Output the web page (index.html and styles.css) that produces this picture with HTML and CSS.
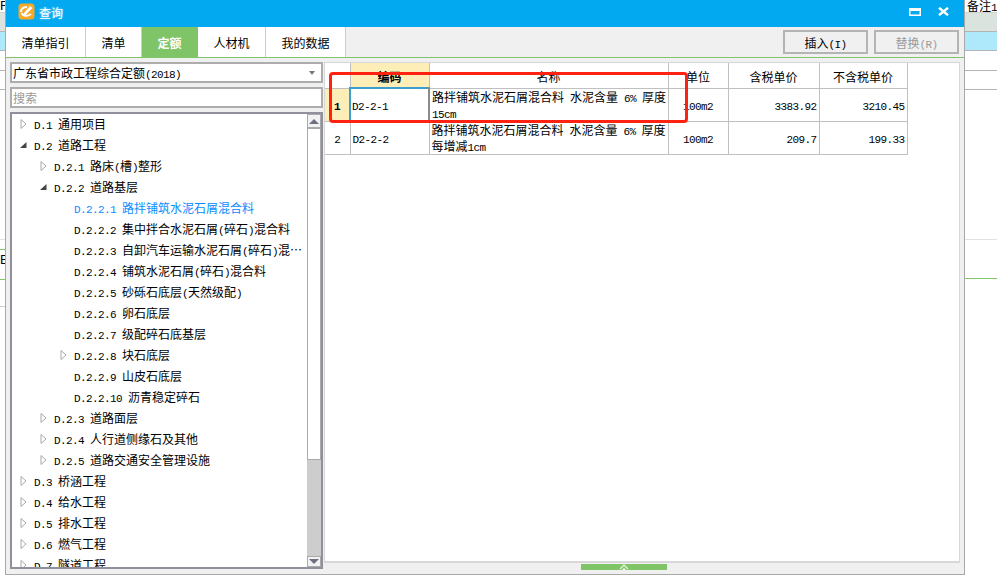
FILE: index.html
```html
<!DOCTYPE html>
<html lang="zh-CN">

<head>
  <meta charset="UTF-8">
  <title>查询</title>
  <link rel="stylesheet" href="styles.css">
</head>

<body>
  <div class="side side-left">
    <div class="side-head">F</div>
    <div class="side-row grey"></div>
    <div class="side-row blue"></div>
    <div class="side-row"></div>
    <div class="side-row"></div>
    <div class="side-low">
      <div class="side-line faint"></div>
      <div class="side-line green"></div>
      <div class="side-e">E</div>
      <div class="side-line green"></div>
      <div class="side-line gap"></div>
    </div>
  </div>

  <div class="window">
    <div class="titlebar">
      <svg class="logo" width="17" height="17" viewBox="0 0 17 17">
        <rect x="0.5" y="0.5" width="16" height="16" rx="3.5" fill="#f9a825" />
        <path d="M3 9 C3 5 6 4 9 4 M3.5 10 C5 13 9 14 13 11" fill="none" stroke="#fff" stroke-width="2" />
        <path d="M6 10 L12 3 L14.5 5 L8 11.5 L5.5 12.5 Z" fill="#fff" />
      </svg>
      <span class="title-text">查询</span>
      <svg class="win-btn" width="12" height="8" viewBox="0 0 12 8">
        <path d="M0 0 H12 V8 H0 Z M1.5 3 V6.5 H10.5 V3 Z" fill="#fff" fill-rule="evenodd" />
      </svg>
      <svg class="win-btn close" width="11" height="9" viewBox="0 0 11 9">
        <path d="M1 0.8 L10 8.2 M10 0.8 L1 8.2" stroke="#fff" stroke-width="2.4" />
      </svg>
    </div>

    <div class="toolbar">
      <div class="tabs">
        <div class="tab w80">清单指引</div>
        <div class="tab w56">清单</div>
        <div class="tab w56 active">定额</div>
        <div class="tab w68">人材机</div>
        <div class="tab w80">我的数据</div>
      </div>
      <div class="actions">
        <button class="btn">插入<span class="la">(I)</span></button>
        <button class="btn disabled">替换<span class="la">(R)</span></button>
      </div>
    </div>

    <div class="content">
      <div class="left-panel">
        <div class="combo">
          <span>广东省市政工程综合定额<span class="la">(2018)</span></span>
          <span class="combo-arrow"></span>
        </div>
        <div class="search">搜索</div>
        <div class="tree">
          <div class="tree-list">
            <div class="node"><svg class="tw" viewBox="0 0 7 10"><path class="closed" d="M1 0.5 L6 5 L1 9.5 Z" /></svg><span class="la">D.1 </span>通用项目</div>
            <div class="node"><svg class="tw" viewBox="0 0 7 10"><path class="open" d="M0 8 L6.5 8 L6.5 2 Z" /></svg><span class="la">D.2 </span>道路工程</div>
            <div class="node l1"><svg class="tw" viewBox="0 0 7 10"><path class="closed" d="M1 0.5 L6 5 L1 9.5 Z" /></svg><span class="la">D.2.1 </span>路床<span class="la">(</span>槽<span class="la">)</span>整形</div>
            <div class="node l1"><svg class="tw" viewBox="0 0 7 10"><path class="open" d="M0 8 L6.5 8 L6.5 2 Z" /></svg><span class="la">D.2.2 </span>道路基层</div>
            <div class="node l2 selected"><span class="la">D.2.2.1 </span>路拌铺筑水泥石屑混合料</div>
            <div class="node l2"><span class="la">D.2.2.2 </span>集中拌合水泥石屑<span class="la">(</span>碎石<span class="la">)</span>混合料</div>
            <div class="node l2"><span class="la">D.2.2.3 </span>自卸汽车运输水泥石屑<span class="la">(</span>碎石<span class="la">)</span>混…</div>
            <div class="node l2"><span class="la">D.2.2.4 </span>铺筑水泥石屑<span class="la">(</span>碎石<span class="la">)</span>混合料</div>
            <div class="node l2"><span class="la">D.2.2.5 </span>砂砾石底层<span class="la">(</span>天然级配<span class="la">)</span></div>
            <div class="node l2"><span class="la">D.2.2.6 </span>卵石底层</div>
            <div class="node l2"><span class="la">D.2.2.7 </span>级配碎石底基层</div>
            <div class="node l2"><svg class="tw" viewBox="0 0 7 10"><path class="closed" d="M1 0.5 L6 5 L1 9.5 Z" /></svg><span class="la">D.2.2.8 </span>块石底层</div>
            <div class="node l2"><span class="la">D.2.2.9 </span>山皮石底层</div>
            <div class="node l2"><span class="la">D.2.2.10 </span>沥青稳定碎石</div>
            <div class="node l1"><svg class="tw" viewBox="0 0 7 10"><path class="closed" d="M1 0.5 L6 5 L1 9.5 Z" /></svg><span class="la">D.2.3 </span>道路面层</div>
            <div class="node l1"><svg class="tw" viewBox="0 0 7 10"><path class="closed" d="M1 0.5 L6 5 L1 9.5 Z" /></svg><span class="la">D.2.4 </span>人行道侧缘石及其他</div>
            <div class="node l1"><svg class="tw" viewBox="0 0 7 10"><path class="closed" d="M1 0.5 L6 5 L1 9.5 Z" /></svg><span class="la">D.2.5 </span>道路交通安全管理设施</div>
            <div class="node"><svg class="tw" viewBox="0 0 7 10"><path class="closed" d="M1 0.5 L6 5 L1 9.5 Z" /></svg><span class="la">D.3 </span>桥涵工程</div>
            <div class="node"><svg class="tw" viewBox="0 0 7 10"><path class="closed" d="M1 0.5 L6 5 L1 9.5 Z" /></svg><span class="la">D.4 </span>给水工程</div>
            <div class="node"><svg class="tw" viewBox="0 0 7 10"><path class="closed" d="M1 0.5 L6 5 L1 9.5 Z" /></svg><span class="la">D.5 </span>排水工程</div>
            <div class="node"><svg class="tw" viewBox="0 0 7 10"><path class="closed" d="M1 0.5 L6 5 L1 9.5 Z" /></svg><span class="la">D.6 </span>燃气工程</div>
            <div class="node"><svg class="tw" viewBox="0 0 7 10"><path class="closed" d="M1 0.5 L6 5 L1 9.5 Z" /></svg><span class="la">D.7 </span>隧道工程</div>
          </div>
          <div class="scrollbar">
            <div class="sb-btn"><span class="sb-up"></span></div>
            <div class="sb-thumb"></div>
            <div class="sb-track"></div>
            <div class="sb-btn small"><span class="sb-down"></span></div>
          </div>
        </div>
      </div>

      <div class="right-panel">
        <div class="result">
          <table class="grid">
            <colgroup>
              <col class="c-no">
              <col class="c-code">
              <col class="c-name">
              <col class="c-unit">
              <col class="c-tax">
              <col class="c-notax">
            </colgroup>
            <tr class="head">
              <th></th>
              <th class="hl">编码</th>
              <th>名称</th>
              <th>单位</th>
              <th>含税单价</th>
              <th>不含税单价</th>
            </tr>
            <tr>
              <td class="no hl"><b class="la">1</b></td>
              <td class="current"><span class="la">D2-2-1</span></td>
              <td class="name">路拌铺筑水泥石屑混合料<span class="la"> </span>水泥含量<span class="la"> 6% </span>厚度<br><span class="la">15cm</span></td>
              <td class="mid"><span class="la">100m2</span></td>
              <td class="num"><span class="la">3383.92</span></td>
              <td class="num"><span class="la">3210.45</span></td>
            </tr>
            <tr>
              <td class="no"><span class="la">2</span></td>
              <td class="code"><span class="la">D2-2-2</span></td>
              <td class="name">路拌铺筑水泥石屑混合料<span class="la"> </span>水泥含量<span class="la"> 6% </span>厚度<br>每增减<span class="la">1cm</span></td>
              <td class="mid"><span class="la">100m2</span></td>
              <td class="num"><span class="la">209.7</span></td>
              <td class="num"><span class="la">199.33</span></td>
            </tr>
          </table>
          <div class="red-mark"></div>
        </div>
        <div class="grip-row">
          <div class="grip">
            <svg width="14" height="6" viewBox="0 0 14 6">
              <path d="M3 5 L7 1 L11 5" fill="none" stroke="#d8f0d0" stroke-width="1.5" />
              <path d="M5 6 L7 4 L9 6 Z" fill="#fff" />
            </svg>
          </div>
        </div>
      </div>
    </div>
  </div>

  <div class="side side-right">
    <div class="side-head">备注<span class="la">1</span></div>
    <div class="side-row grey"></div>
    <div class="side-row blue"></div>
    <div class="side-row"></div>
    <div class="side-row"></div>
    <div class="side-low">
      <div class="side-line faint"></div>
      <div class="side-line green wide"></div>
    </div>
  </div>
</body>

</html>
```

FILE: styles.css
```css
* {
  box-sizing: border-box;
}

html,
body {
  height: 583px;
  overflow: hidden;
}

body {
  margin: 0;
  display: flex;
  background-color: white;
  color: black;
  font-family: "Noto Sans CJK SC", sans-serif;
  font-size: 12px;
}

/* half width latin, the old dialog font draws these at 6px */
.la {
  font-family: "Liberation Mono", monospace;
  font-size: 11px;
  letter-spacing: -0.6px;
  line-height: 1;
  white-space: pre;
}

/* the main window's rows showing at both sides of the dialog */
.side {
  flex: none;
  overflow: hidden;
}

.side-left {
  width: 5px;
}

.side-right {
  width: 32px;
}

.side-head {
  height: 12px;
  line-height: 11px;
  padding-left: 2px;
  white-space: nowrap;
  overflow: hidden;
}

.side-left .side-head {
  padding-left: 0;
  font-family: "Liberation Sans", sans-serif;
  font-size: 13px;
}

.side-row {
  height: 19.5px;
  border-bottom: 1px solid #b4b4b4;
}

.side-row.grey {
  background-color: #dbe3de;
  border-top: 1px solid #cfd4d0;
}

.side-row.blue {
  background-color: #aee8fb;
}

.side-low {
  padding-top: 149px;
}

.side-line {
  height: 1px;
}

.side-line.faint {
  background-color: #e2e2e2;
}

.side-line.green {
  background-color: #82c86c;
  margin-top: 9px;
}

.side-line.green.wide {
  margin-top: 38px;
}

.side-line.gap {
  background-color: #d0d0d0;
  margin-top: 26px;
}

.side-e {
  height: 20px;
  line-height: 20px;
  font-family: "Liberation Sans", sans-serif;
  font-size: 13px;
}

/* dialog */
.window {
  flex: none;
  width: 960px;
  height: 575px;
  display: flex;
  flex-direction: column;
  background-color: #f0f0f0;
  border-left: 1px solid #a8a8a8;
  border-right: 1px solid #a8a8a8;
  border-bottom: 1px solid #a8a8a8;
}

.titlebar {
  flex: none;
  height: 27px;
  display: flex;
  align-items: center;
  padding-left: 12px;
  background-color: #03a9f0;
  color: white;
}

.logo {
  flex: none;
  margin-top: -4px;
}

.title-text {
  margin-left: 4px;
  margin-top: -3px;
  flex: 1;
  text-shadow: 0 0 2px #bfeaff;
}

.win-btn {
  flex: none;
  margin-top: -4px;
  margin-right: 42px;
}

.win-btn.close {
  margin-left: -25px;
  margin-right: 15px;
}

.toolbar {
  flex: none;
  height: 31px;
  display: flex;
  justify-content: space-between;
  border-bottom: 1px solid #82c46c;
}

.tabs {
  display: flex;
  background-color: white;
}

.tab {
  height: 30px;
  line-height: 31px;
  text-align: center;
  border-right: 1px solid #badcb0;
}

.w80 {
  width: 80px;
}

.w56 {
  width: 56px;
}

.w68 {
  width: 68px;
}

.tab.active {
  background-color: #80c468;
  border-right-color: #80c468;
  color: white;
  font-weight: bold;
}

.actions {
  display: flex;
  gap: 6px;
  padding: 3px 5px 0 0;
}

.btn {
  width: 85px;
  height: 24px;
  padding: 2px 0 0;
  background-color: #f0f0f0;
  border: 2px solid #b4b4b4;
  color: black;
  font-family: inherit;
  font-size: 12px;
  line-height: 18px;
}

.btn.disabled {
  color: #9a9a9a;
}

.content {
  flex: 1;
  display: flex;
  gap: 1px;
  padding: 4px 4px 0;
  min-height: 0;
}

.left-panel {
  flex: none;
  width: 313px;
  display: flex;
  flex-direction: column;
  gap: 4px;
  padding-bottom: 5px;
}

.combo {
  flex: none;
  height: 21px;
  display: flex;
  align-items: center;
  justify-content: space-between;
  padding: 0 6px 0 1px;
  background-color: white;
  border: 2px solid #adadad;
}

.combo-arrow {
  width: 0;
  height: 0;
  border-left: 3px solid transparent;
  border-right: 3px solid transparent;
  border-top: 4px solid #777;
}

.search {
  flex: none;
  height: 21px;
  line-height: 17px;
  padding-left: 1px;
  background-color: white;
  border: 2px solid #adadad;
  color: #999;
}

.tree {
  flex: 1;
  min-height: 0;
  display: flex;
  background-color: white;
  border: 2px solid #8f8f9e;
}

.tree-list {
  flex: 1;
  overflow: hidden;
}

.node {
  height: 21px;
  line-height: 19px;
  padding-left: 22px;
  position: relative;
  white-space: nowrap;
}

.node.l1 {
  padding-left: 42px;
}

.node.l2 {
  padding-left: 62px;
}

.node.selected {
  color: #0a8cff;
}

.tw {
  width: 7px;
  height: 10px;
  position: absolute;
  top: 5px;
  margin-left: -14px;
}

.closed {
  fill: #fff;
  stroke: #a8a8a8;
}

.open {
  fill: #444;
}

.scrollbar {
  flex: none;
  width: 14px;
  display: flex;
  flex-direction: column;
  background-color: #cdcdcd;
}

.sb-btn {
  flex: none;
  height: 14px;
  display: flex;
  align-items: center;
  justify-content: center;
  background-color: #f2f2f2;
  border: 1px solid #aaa;
}

.sb-btn.small {
  height: 11px;
}

.sb-up {
  border-left: 5px solid transparent;
  border-right: 5px solid transparent;
  border-bottom: 5px solid #6d7080;
}

.sb-down {
  border-left: 5px solid transparent;
  border-right: 5px solid transparent;
  border-top: 5px solid #6d7080;
}

.sb-thumb {
  flex: none;
  height: 332px;
  background-color: white;
  border: 1px solid #aaa;
}

.sb-track {
  flex: 1;
}

.right-panel {
  flex: 1;
  min-width: 0;
  display: flex;
  flex-direction: column;
}

.result {
  height: 501px;
  position: relative;
  background-color: white;
  border: 1px solid #d8d8d8;
  border-bottom-width: 2px;
}

.grid {
  border-collapse: collapse;
  table-layout: fixed;
  width: 582px;
}

.c-no {
  width: 25px;
}

.c-code {
  width: 79px;
}

.c-name {
  width: 239px;
}

.c-unit {
  width: 60px;
}

.c-tax {
  width: 91px;
}

.c-notax {
  width: 88px;
}

.grid th,
.grid td {
  border: 1px solid #c0c0c0;
  padding: 0;
  font-weight: normal;
  line-height: 15px;
  overflow: hidden;
  white-space: nowrap;
}

.grid tr {
  height: 33px;
}

.grid tr.head {
  height: 25px;
}

.grid tr.head th {
  border-top: none;
  padding-top: 3px;
}

.grid th:first-child,
.grid td:first-child {
  border-left: none;
}

.grid th.hl {
  font-weight: bold;
  background-color: #fdeeb8;
}

.grid td.hl {
  background-color: #fdeeb8;
}

.no {
  text-align: center;
}

.grid td.code {
  padding-left: 2px;
}

.grid td.current {
  padding-left: 1px;
  border-top: 2px solid #3a9fd0;
  border-left: 2px solid #3a9fd0;
  border-right: 2px solid #8a8a8a;
  border-bottom: 2px solid #8a8a8a;
}

.grid td.name {
  padding-left: 2px;
}

.mid {
  text-align: center;
}

.grid td.num {
  text-align: right;
  padding-right: 2px;
}

/* hand drawn annotation from the screenshot */
.red-mark {
  position: absolute;
  left: 4px;
  top: 9px;
  width: 359px;
  height: 51px;
  border: 3px solid #ff2211;
  border-radius: 4px;
}

.grip-row {
  flex: none;
  height: 6px;
  margin-top: 1px;
  padding-left: 257px;
}

.grip {
  width: 86px;
  height: 6px;
  display: flex;
  justify-content: center;
  background-color: #80c468;
}

.grip svg {
  display: block;
}
```
